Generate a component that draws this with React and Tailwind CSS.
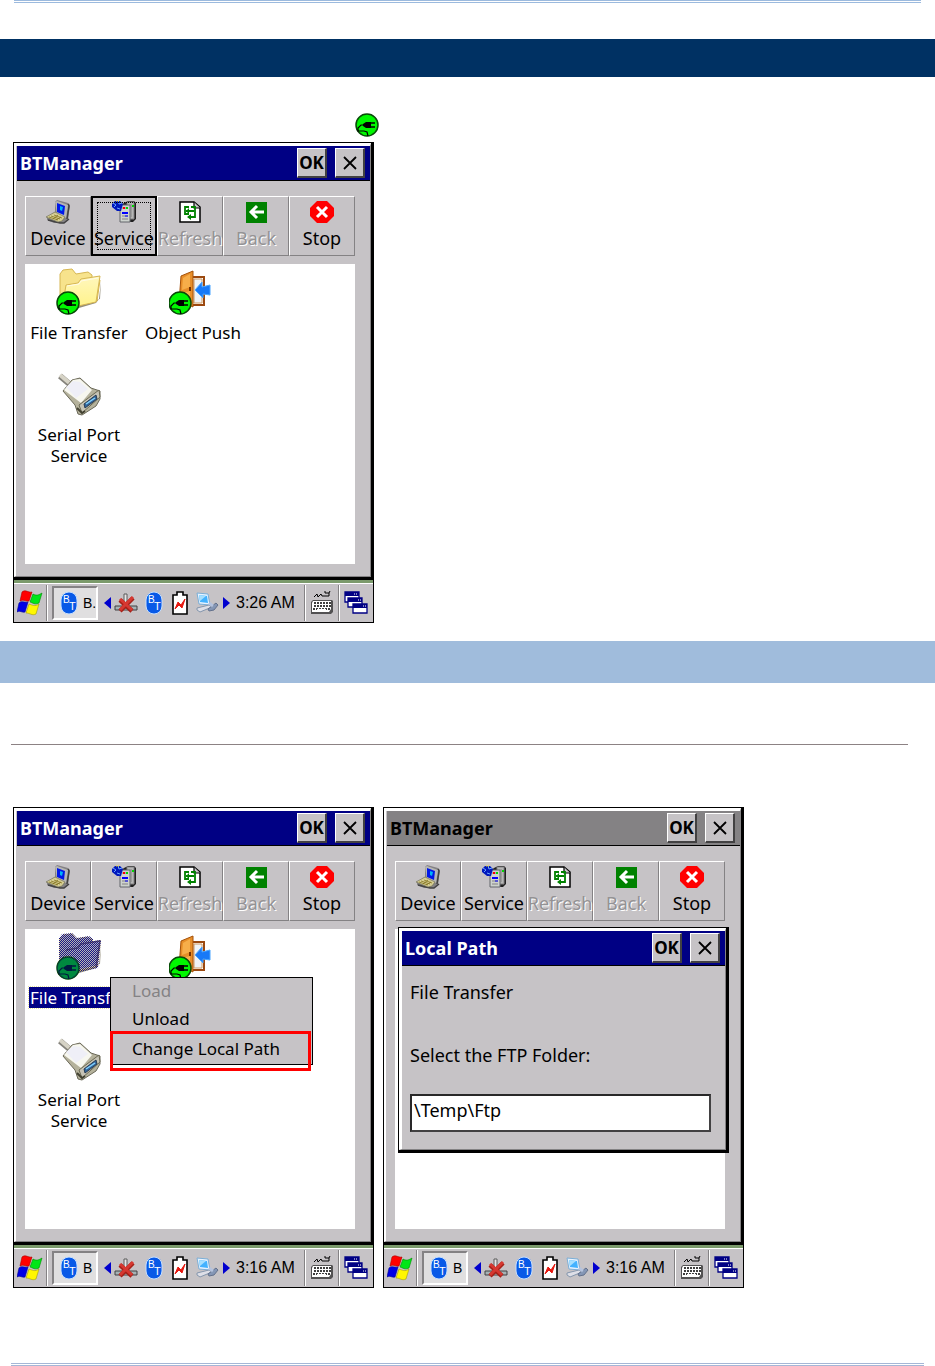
import React from "react";

const UI = "font-['Noto_Sans','Open_Sans',sans-serif]";

function PlugShape() {
  return (
    <>
      <circle cx="12" cy="12" r="11" fill="#00f700" stroke="#084a08" strokeWidth="1.5" />
      <path d="M11 9h5v6h-5l-3-2V11z" fill="#000" />
      <path d="M15 10h5m-5 4h5" stroke="#000" strokeWidth="1.5" />
      <path d="M8 12H6l-3 3v3h6l3 1 1 4" fill="none" stroke="#000" strokeWidth="1.2" />
    </>
  );
}

function PlugIcon() {
  return (
    <svg width="24" height="24" viewBox="0 0 24 24" aria-hidden="true"><PlugShape /></svg>
  );
}

function DeviceIcon() {
  return (
    <svg width="26" height="24" viewBox="0 0 26 24" aria-hidden="true">
      <path d="M10 2 12 0l11 3 2 2-2 15-4 3H9l-7-3v-3l8-5z" fill="#848284" />
      <path d="M3 20 15 23h4l5-4" stroke="#424142" strokeWidth="1.5" fill="none" />
      <path d="M23 4 24 6 22 19" stroke="#424142" strokeWidth="1.5" fill="none" />
      <path d="m10 2 2-1 11 4-2 13-9-4z" fill="#b5b6b5" />
      <path d="m12 3 8 3-1 9-7-3z" fill="#0018e8" />
      <path d="m15 6 3 1-1 4-2-1z" fill="#00b5f7" />
      <path d="m1 17 9-5 10 5-3 4-4 1z" fill="#d6ce94" stroke="#73715a" strokeWidth=".7" />
      <path d="m4 17 9 3m-7-4 9 3m-6-4 8 3M8 19l5-4m-2 5 5-3" stroke="#847521" strokeWidth=".8" />
    </svg>
  );
}

function ServiceIcon() {
  return (
    <svg width="26" height="24" viewBox="0 0 26 24" aria-hidden="true">
      <path d="M13 3 17 1h6l2 2v16l-3 3H9V6z" fill="#212021" />
      <path d="M16 2h7v17h-7z" fill="#b5b6b5" stroke="#848284" />
      <path d="M9 5h10v17H9z" fill="#ced3ce" stroke="#63656b" />
      <path d="M11 8h6M11 16h6m-6 3h6M20 4v13" stroke="#848284" />
      <path d="M11 13h6" stroke="#0000ff" strokeWidth="2" />
      <path d="M14 16h3" stroke="#0000ff" />
      <path d="M12 8h2" stroke="#f00" strokeWidth="2" />
      <path d="M15 8h2m4-2h2" stroke="#00d800" strokeWidth="2" />
      <path d="M1 4 4 1h5l3 3-2 7H6L1 7z" fill="#0018bd" />
      <path d="M2 3 5 5 3 7m4-6 1 3 3-1M6 8l3 1" stroke="#6ba6ff" fill="none" />
      <path d="M5 1h4" stroke="#ffdf00" strokeDasharray="1 1" />
    </svg>
  );
}

function RefreshIcon() {
  return (
    <svg width="26" height="24" viewBox="0 0 26 24" aria-hidden="true">
      <path d="M3 2h14l6 5v15H3z" fill="#fff" stroke="#000" strokeWidth="1.5" />
      <path d="M17 2v6h6" fill="#c6c3c6" stroke="#000" strokeWidth="1.2" />
      <path d="M12 7H8v7h4m-3-3h4m1-4h4v10h-6m5-6h-5" fill="none" stroke="#008200" strokeWidth="1.8" />
      <path d="M12 8v6l-3-3zm2 6v6l-4-3z" fill="#008200" />
    </svg>
  );
}

function BackIcon() {
  return (
    <svg width="26" height="24" viewBox="0 0 26 24" aria-hidden="true">
      <rect x="3" y="2" width="21" height="21" fill="#008200" />
      <path d="M21 12H8m6-6-6 6 6 6" fill="none" stroke="#fff" strokeWidth="3" />
    </svg>
  );
}

function StopIcon() {
  return (
    <svg width="26" height="24" viewBox="0 0 26 24" aria-hidden="true">
      <path d="M8 1h10l7 7v8l-7 7H8l-7-7V8z" fill="#ff0000" />
      <path d="m8 7 10 10m0-10L8 17" stroke="#fff" strokeWidth="3" />
    </svg>
  );
}

function FolderIcon({ selected }) {
  return (
    <svg width="48" height="48" viewBox="0 0 48 48" aria-hidden="true">
      <defs>
        <linearGradient id="folderFront" x1="0" y1="0" x2="0" y2="1">
          <stop offset="0" stopColor="#fff7bd" />
          <stop offset="1" stopColor="#fff38c" />
        </linearGradient>
        <pattern id="selectedDots" width="2" height="2" patternUnits="userSpaceOnUse">
          <rect width="1" height="1" fill="#181884" />
          <rect x="1" y="1" width="1" height="1" fill="#181884" />
        </pattern>
      </defs>
      <path d="m8 38 37-6 1-18-2 18-3 4-17 5z" fill="#948e7b" />
      <path d="M5 36V7l3-4 9-1 4 5 12-2 4 3v7l8-2-3 21-19 4z" fill="#f7e38c" stroke="#d6b652" />
      <path d="m8 36 3-18 12-2 3-4 19-3-4 26-18 4z" fill="url(#folderFront)" stroke="#d6b652" />
      <path d="m12 19 12-2 2-3 17-3" fill="none" stroke="#fffbe7" />
      {selected && (
        <>
          <path d="M5 36V7l3-4 9-1 4 5 12-2 4 3v2l8-1-3 24-19 5z" fill="#a5a2bd" fillOpacity=".8" />
          <path d="m11 18 12-2 3-4 19-3-4 26" fill="none" stroke="#6b5963" strokeWidth="1.5" />
          <path d="M4 37V6l3-4 10-1 5 5 12-2 4 3v2l8-1-3 28-19 4z" fill="url(#selectedDots)" />
        </>
      )}
      <g transform="translate(1 24)"><PlugShape /></g>
      {selected && <circle cx="13" cy="36" r="11" fill="#003173" fillOpacity=".55" />}
    </svg>
  );
}

function DoorIcon() {
  return (
    <svg width="48" height="48" viewBox="0 0 48 48" aria-hidden="true">
      <path d="M23 10h12v28H23z" fill="#fff" stroke="#9c4910" strokeWidth="2" />
      <path d="M25 12h8v24h-8z" fill="#eff3f7" stroke="#ce9a63" />
      <path d="m12 9 12-5v36l-6-3-8-1z" fill="#e78e29" stroke="#a55108" />
      <path d="m14 11 7-4v13l-8 3zm-1 15 8-2v11l-8-1z" fill="#f7ae4a" />
      <path d="M20 20h2v4h-2z" fill="#733000" />
      <path d="m41 18-8 2v-5L26 23l8 8v-4l7 1z" fill="#1879f7" stroke="#4aa6ff" />
      <g transform="translate(-1 24)"><PlugShape /></g>
    </svg>
  );
}

function SerialIcon() {
  return (
    <svg width="48" height="48" viewBox="0 0 48 48" aria-hidden="true">
      <path d="m5 7 13 11" stroke="#84827b" strokeWidth="6" />
      <path d="m5 6 13 11" stroke="#d6d3c6" strokeWidth="4" />
      <path d="m8 22 9-11 8-2 11 10 9 3v8l-4 7-14 9-4-1-3-9z" fill="#b5b29c" stroke="#6b6959" />
      <path d="m9 21 9-10 7-1 12 11-11 13z" fill="#f7f7ef" />
      <path d="m11 18 7-6 7 1 8 7-12 9z" fill="#efeff7" />
      <path d="m24 36 20-15 1 7-18 16z" fill="#c6c3b5" stroke="#6b6952" />
      <path d="m29 35 12-9 1 4-12 9z" fill="#31659c" stroke="#293c52" />
      <path d="m31 35 9-6" stroke="#84d3ff" strokeWidth="1.5" />
      <path d="m22 39 5 5 3-2" fill="none" stroke="#424131" strokeWidth="2" />
    </svg>
  );
}

function StartLogo() {
  return (
    <svg width="26" height="28" viewBox="0 0 26 28" aria-hidden="true">
      <path d="M5 3c4-3 6 1 10 0l-3 9c-3 1-5-2-9 0z" fill="#ff0000" stroke="#ad0000" strokeWidth=".6" />
      <path d="M16 5c3 2 6 1 9-1l-3 10c-4 2-6 0-9-1z" fill="#00e718" stroke="#008c00" strokeWidth=".6" />
      <path d="M2 14c3-3 6 0 9-1L8 23c-3 1-5-2-8 0z" fill="#0000e7" stroke="#000094" strokeWidth=".6" />
      <path d="M12 15c3 1 6 3 10 0l-3 10c-4 2-6-1-10-1z" fill="#fff700" stroke="#a59e00" strokeWidth=".6" />
    </svg>
  );
}

function BluetoothBadge() {
  return (
    <svg className="shrink-0" width="18" height="24" viewBox="0 0 18 24" aria-hidden="true">
      <rect x="1" y="1" width="16" height="22" rx="8" fill="#0859e7" stroke="#c6dfff" strokeWidth="1" />
      <text x="3" y="12" fill="#fff" fontSize="10" fontFamily="Liberation Sans, sans-serif">B</text>
      <text x="9" y="19" fill="#fff" fontSize="11" fontFamily="Liberation Sans, sans-serif">T</text>
    </svg>
  );
}

function NoNetworkIcon() {
  return (
    <svg width="24" height="22" viewBox="0 0 24 22" aria-hidden="true">
      <path d="M10 2h3v11h-3z" fill="#e7e7e7" stroke="#5a5a5a" />
      <path d="M1 14h22v4H1z" fill="#a5b2b5" stroke="#424142" />
      <path d="M8 13h8v6H8z" fill="#848284" />
      <path d="m6 8 12 11M19 6 6 19" stroke="#a52018" strokeWidth="4.5" />
      <path d="m6 7 12 11M19 5 6 18" stroke="#d63831" strokeWidth="3" />
    </svg>
  );
}

function BatteryIcon() {
  return (
    <svg width="16" height="24" viewBox="0 0 16 24" aria-hidden="true">
      <path d="M5 1h6v3h4v19H1V4h4z" fill="#fff" stroke="#000" strokeWidth="1.6" />
      <path d="m3 18 3-7 3 3 4-6-3 9-3-3z" fill="#e71810" stroke="#e71810" />
    </svg>
  );
}

function ComputerIcon() {
  return (
    <svg width="24" height="24" viewBox="0 0 24 24" aria-hidden="true">
      <path d="m2 2 11 1 2 11-11-1z" fill="#e7f3ff" stroke="#7baed6" />
      <path d="m4 4 8 1 1 7-8-1z" fill="#42b2ff" />
      <path d="m4 4 7 1-6 5z" fill="#a5dfff" />
      <path d="m2 17 12-3 3 2-12 5-3-2z" fill="#dedfe7" stroke="#8496ad" />
      <path d="m13 18 8-6 2 2-4 5-5 1z" fill="#8496b5" stroke="#63718c" />
      <path d="m14 12 4 3" stroke="#b5c3de" strokeWidth="3" />
    </svg>
  );
}

function KeyboardIcon() {
  return (
    <svg width="24" height="26" viewBox="0 0 24 26" aria-hidden="true">
      <path d="m4 7 3-3 1 3 3-3 1 2h7V3h-4V1m4 2 1-2" fill="none" stroke="#000" />
      <path d="M3 10h19l1 1v11l-2 2H1V12z" fill="#525152" />
      <path d="M3 11h18v8l-2 3H2V13z" fill="#fff" />
      <path d="M4 13h17M4 16h17M3 19h17" stroke="#000" strokeWidth="1.5" strokeDasharray="2 1" />
      <path d="M7 20h9" stroke="#fff" strokeWidth="2" />
    </svg>
  );
}

function WindowsIcon() {
  return (
    <svg width="24" height="24" viewBox="0 0 24 24" aria-hidden="true">
      <g fill="#fff" stroke="#000084" strokeWidth="1.3">
        <path d="M1 1h14v10H1z" /><path d="M4 7h14v9H4z" /><path d="M9 13h14v9H9z" />
      </g>
      <path d="M1 1h14v4H1zm3 6h14v4H4zm5 6h14v4H9z" fill="#000084" />
      <path d="M10 3h4m0 6h4m1 6h3" stroke="#fff" strokeDasharray="1 1" />
    </svg>
  );
}

function CaptionButton({ children, label }) {
  return (
    <button aria-label={label} className="flex h-[30px] w-[30px] items-center justify-center border border-r-2 border-b-2 border-t-white border-l-white border-r-[#424142] border-b-[#424142] bg-[#c6c3c6] text-[17px] font-bold text-black">
      {children}
    </button>
  );
}

function TitleBar({ title, inactive }) {
  return (
    <header className={`flex h-[35px] items-center justify-between border-b border-black pr-[5px] pl-[3px] ${inactive ? "bg-[#848284] text-black" : "bg-[#000084] text-white"}`}>
      <h2 className="text-lg leading-6 font-bold">{title}</h2>
      <div className="flex gap-2">
        <CaptionButton label="OK">OK</CaptionButton>
        <CaptionButton label="Close">
          <svg width="14" height="14" viewBox="0 0 14 14" aria-hidden="true"><path d="m1 1 12 12M13 1 1 13" stroke="#000" strokeWidth="1.8" /></svg>
        </CaptionButton>
      </div>
    </header>
  );
}

const tools = [
  { name: "Device", Icon: DeviceIcon },
  { name: "Service", Icon: ServiceIcon },
  { name: "Refresh", Icon: RefreshIcon, disabled: true },
  { name: "Back", Icon: BackIcon, disabled: true },
  { name: "Stop", Icon: StopIcon },
];

function Toolbar({ focused }) {
  return (
    <div role="toolbar" className="grid h-[60px] grid-cols-5">
      {tools.map(({ name, Icon, disabled }) => (
        <button
          key={name}
          disabled={disabled}
          className={`relative flex min-w-0 flex-col items-center whitespace-nowrap ${focused === name ? "border-2 border-black pt-[2px]" : "border border-t-white border-l-white border-r-[#848284] border-b-[#848284] pt-[3px]"} ${disabled ? "text-[#949294] [text-shadow:1px_1px_0_#fff]" : "text-black"}`}
        >
          <Icon />
          <span className="mt-[2px] text-lg leading-6">{name}</span>
          {focused === name && <span className="absolute inset-1 border border-dotted border-black" />}
        </button>
      ))}
    </div>
  );
}

function Service({ children, icon, selected }) {
  return (
    <li className="flex flex-col items-center">
      {icon}
      <button className={`mt-[7px] text-[17px] leading-[21px] ${selected ? "ml-1 w-[81px] self-start overflow-hidden bg-[#000084] pl-px text-left whitespace-nowrap text-white outline outline-dotted outline-[#e7e39c]" : "text-center text-black"}`}>
        {children}
      </button>
    </li>
  );
}

function Separator() {
  return <span className="h-9 w-[2px] border-l border-[#848284] bg-white" />;
}

function Taskbar({ time, task }) {
  return (
    <footer className="border-t-[3px] border-[#7b9a6b] bg-[#c6c3c6] font-['Liberation_Sans',Arial,sans-serif]">
      <div className="flex h-[39px] items-center border-t border-white">
        <button aria-label="Start" className="flex w-[32px] justify-center"><StartLogo /></button>
        <Separator />
        <button className="ml-1 flex h-[34px] w-[46px] items-center gap-[5px] overflow-hidden border-2 border-t-[#848284] border-l-[#848284] border-r-white border-b-white bg-[#e0dfe0] pl-[6px] text-sm">
          <BluetoothBadge /><span>{task}</span>
        </button>
        <div className="ml-[6px] flex items-center">
          <svg width="7" height="12" viewBox="0 0 7 12" aria-hidden="true"><path d="M7 0v12L0 6z" fill="#0000ce" /></svg>
          <span className="ml-[3px]"><NoNetworkIcon /></span>
          <span className="ml-[7px]"><BluetoothBadge /></span>
          <span className="ml-[9px]"><BatteryIcon /></span>
          <span className="ml-[7px]"><ComputerIcon /></span>
          <svg className="ml-1" width="7" height="12" viewBox="0 0 7 12" aria-hidden="true"><path d="M0 0v12l7-6z" fill="#0000ce" /></svg>
        </div>
        <time className="ml-[6px] w-[68px] text-base leading-5 whitespace-nowrap">{time}</time>
        <Separator />
        <button aria-label="Keyboard" className="flex w-[32px] justify-center"><KeyboardIcon /></button>
        <Separator />
        <button aria-label="Windows" className="flex w-[32px] justify-center"><WindowsIcon /></button>
      </div>
    </footer>
  );
}

function Screen({ time, task, focused, inactive, services, children }) {
  return (
    <section className={`relative w-full max-w-[361px] border border-black bg-[#c6c3c6] ${UI}`}>
      <div className="border-r-2 border-b-[3px] border-black">
        <div className="border-t-[3px] border-l-2 border-r border-b border-t-white border-l-white border-r-[#848284] border-b-[#848284] pl-px">
          <TitleBar title="BTManager" inactive={inactive} />
          <div className="pt-[15px] pr-[15px] pb-3 pl-2">
            <Toolbar focused={focused} />
            <ul className="mt-2 grid h-[300px] auto-rows-[102px] grid-cols-[108px_108px] gap-x-[6px] bg-white pt-[3px]">
              {services}
            </ul>
          </div>
        </div>
      </div>
      <Taskbar time={time} task={task} />
      {children}
    </section>
  );
}

function ServiceItems({ selected }) {
  return (
    <>
      <Service icon={<FolderIcon selected={selected} />} selected={selected}>File Transfer</Service>
      <Service icon={<DoorIcon />}>{selected ? null : "Object Push"}</Service>
      <Service icon={<SerialIcon />}>Serial Port<br />Service</Service>
    </>
  );
}

function ContextMenu() {
  return (
    <div role="menu" className="absolute top-[169px] left-[96px] w-[203px] border border-black bg-[#c6c3c6] text-[17px] leading-6">
      <button role="menuitem" disabled className="block h-[26px] w-full pl-[21px] text-left text-[#848284]">Load</button>
      <button role="menuitem" className="block h-[29px] w-full pl-[21px] text-left">Unload</button>
      <button role="menuitem" className="block h-[31px] w-full pl-[21px] text-left">Change Local Path</button>
      <span className="absolute -bottom-[7px] -left-px h-[40px] w-full border-[3px] border-[#ff0000]" />
    </div>
  );
}

function PathDialog() {
  return (
    <div role="dialog" aria-label="Local Path" className="absolute top-[119px] left-[14px] w-[331px] border border-r-[3px] border-b-[3px] border-black bg-[#c6c3c6]">
      <div className="border-t-[3px] border-l-[3px] border-r border-b border-t-white border-l-white border-r-[#848284] border-b-[#848284]">
        <TitleBar title="Local Path" />
        <div className="px-2 pt-[14px] pb-[17px] text-lg leading-6">
          <p>File Transfer</p>
          <label htmlFor="ftp-folder" className="mt-[39px] block">Select the FTP Folder:</label>
          <input id="ftp-folder" defaultValue="\Temp\Ftp" className="mt-[27px] block h-[38px] w-[301px] border-2 border-t-[#292829] border-l-[#292829] border-r-[#424142] border-b-[#424142] bg-white px-[2px] pb-[6px] text-lg text-black" />
        </div>
      </div>
    </div>
  );
}

export default function App() {
  return (
    <main className="min-h-screen bg-white">
      <div className="mr-[14px] ml-[14px] h-[3px] border-y border-[#9cbade]" />
      <div className="mt-9 h-[38px] bg-[#003163]" />
      <div className="mt-9 pl-[355px]"><PlugIcon /></div>
      <div className="mt-[5px] px-[13px]">
        <Screen time="3:26 AM" task="B." focused="Service" services={<ServiceItems />} />
      </div>
      <div className="mt-[18px] h-[42px] bg-[#a0bcdc]" />
      <hr className="mt-[61px] mr-[27px] ml-[11px] border-[#8c8284]" />
      <div className="mt-[62px] flex gap-[9px] px-[13px]">
        <Screen time="3:16 AM" task="B" services={<ServiceItems selected />}><ContextMenu /></Screen>
        <Screen time="3:16 AM" task="B" inactive><PathDialog /></Screen>
      </div>
      <div className="mt-[75px] mr-[11px] ml-[11px] h-[3px] border-y border-[#a5b6d6]" />
    </main>
  );
}
